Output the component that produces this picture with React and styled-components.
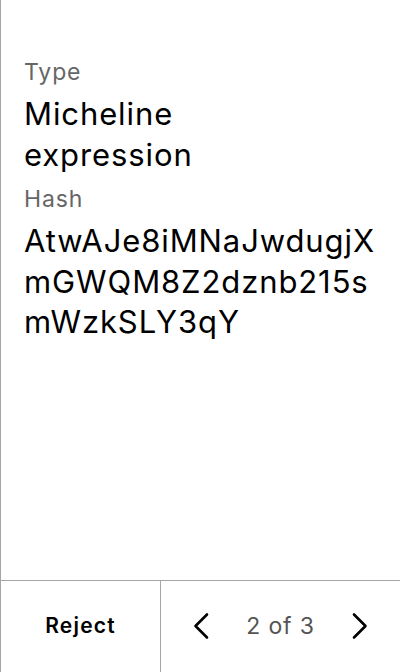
import React from "react";
import styled, { createGlobalStyle } from "styled-components";

const GlobalStyle = createGlobalStyle`
  html, body {
    margin: 0;
    padding: 0;
    background: #fff;
  }
  body {
    font-family: Inter, "Noto Sans", sans-serif;
    color: #000;
  }
`;

const Screen = styled.div`
  height: 672px;
  box-sizing: border-box;
  border-left: 1px solid #a6a6a6;
  display: flex;
  flex-direction: column;
`;

const Content = styled.div`
  flex: 1;
  padding: 58px 22px 0 23px;
`;

const Label = styled.div`
  font-size: 23px;
  line-height: 28px;
  letter-spacing: 0.9px;
  color: #666;
  margin-bottom: 8px;
`;

const Value = styled.div`
  font-size: 31px;
  line-height: 40.5px;
  letter-spacing: 0.9px;
  margin-bottom: 10px;
  word-break: break-all;
`;

const Footer = styled.div`
  height: 92px;
  box-sizing: border-box;
  border-top: 1px solid #a6a6a6;
  display: grid;
  grid-template-columns: 160px 1fr;
`;

const RejectButton = styled.button`
  border: none;
  border-right: 1px solid #a6a6a6;
  background: none;
  font-family: inherit;
  font-size: 21px;
  font-weight: 600;
  letter-spacing: 1.2px;
  color: #000;
  padding: 0 0 2px;
`;

const Pager = styled.div`
  display: flex;
  align-items: center;
  justify-content: center;
  gap: 37px;
  padding-bottom: 2px;
`;

const PageText = styled.span`
  font-size: 23px;
  letter-spacing: 0.8px;
  color: #555;
`;

const Arrow = styled.button`
  border: none;
  background: none;
  padding: 0;
  display: flex;
`;

const Chevron = ({ dir }) => (
  <svg width="16" height="28" viewBox="0 0 16 28" fill="none">
    <path
      d={dir === "left" ? "M14 2.5 L2.5 14 L14 25.5" : "M2 2.5 L13.5 14 L2 25.5"}
      stroke="#000"
      strokeWidth="2.6"
      strokeLinecap="round"
      strokeLinejoin="round"
    />
  </svg>
);

export default function App() {
  return (
    <>
      <GlobalStyle />
      <Screen>
        <Content>
          <Label>Type</Label>
          <Value>
            Micheline
            <br />
            expression
          </Value>
          <Label>Hash</Label>
          <Value>AtwAJe8iMNaJwdugjXmGWQM8Z2dznb215smWzkSLY3qY</Value>
        </Content>
        <Footer>
          <RejectButton>Reject</RejectButton>
          <Pager>
            <Arrow>
              <Chevron dir="left" />
            </Arrow>
            <PageText>2 of 3</PageText>
            <Arrow>
              <Chevron dir="right" />
            </Arrow>
          </Pager>
        </Footer>
      </Screen>
    </>
  );
}
